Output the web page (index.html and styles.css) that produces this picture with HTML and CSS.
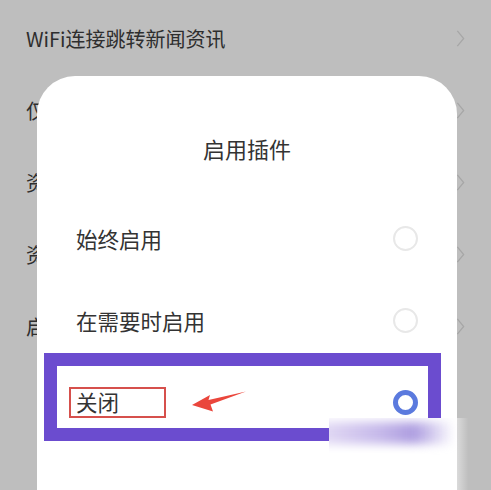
FILE: index.html
```html
<!DOCTYPE html>
<html lang="zh-CN">
<head>
    <meta charset="UTF-8">
    <meta name="viewport" content="width=device-width, initial-scale=1.0">
    <title>插件设置</title>
    <link rel="stylesheet" href="styles.css">
</head>
<body>
    <!-- Settings list (dimmed behind the dialog) -->
    <div class="settings">
        <div class="setting-row">
            <span>WiFi连接跳转新闻资讯</span>
            <svg class="chevron" viewBox="0 0 10 20"><path d="M1.5 1.5 L8.5 10 L1.5 18.5"/></svg>
        </div>
        <div class="setting-row">
            <span>仅WiFi下加载</span>
            <svg class="chevron" viewBox="0 0 10 20"><path d="M1.5 1.5 L8.5 10 L1.5 18.5"/></svg>
        </div>
        <div class="setting-row">
            <span>资讯推送通知</span>
            <svg class="chevron" viewBox="0 0 10 20"><path d="M1.5 1.5 L8.5 10 L1.5 18.5"/></svg>
        </div>
        <div class="setting-row">
            <span>资讯</span>
            <svg class="chevron" viewBox="0 0 10 20"><path d="M1.5 1.5 L8.5 10 L1.5 18.5"/></svg>
        </div>
        <div class="setting-row">
            <span>启用</span>
            <svg class="chevron" viewBox="0 0 10 20"><path d="M1.5 1.5 L8.5 10 L1.5 18.5"/></svg>
        </div>
    </div>

    <!-- Bottom sheet dialog -->
    <div class="dialog">
        <div class="dialog-title">启用插件</div>
        <div class="options">
            <div class="option">
                <span>始终启用</span>
                <span class="radio"></span>
            </div>
            <div class="option">
                <span>在需要时启用</span>
                <span class="radio"></span>
            </div>
            <div class="option-marked">
                <div class="option-inner">
                    <span class="label-box">关闭</span>
                    <svg class="pointer" viewBox="0 0 56 22">
                        <path d="M1 14 L19 4 L17.5 9 L55 0.5 L19.5 13.5 L22 20.5 Z"/>
                    </svg>
                    <span class="radio checked"></span>
                </div>
            </div>
        </div>
    </div>

    <div class="watermark"><div class="watermark-glow"></div></div>
</body>
</html>
```

FILE: styles.css
```css
* { margin: 0; padding: 0; box-sizing: border-box; }
body {
    width: 491px;
    height: 490px;
    overflow: hidden;
    position: relative;
    background: #bebebe;
    font-family: "Noto Sans CJK SC", "Noto Sans", sans-serif;
    color: #2e2e2e;
}
.settings { padding-top: 2px; }
.setting-row {
    height: 72px;
    padding: 0 26px;
    display: flex;
    align-items: center;
    justify-content: space-between;
    font-size: 20px;
}
.chevron { width: 9px; height: 19px; }
.chevron path { fill: none; stroke: #a6a6a6; stroke-width: 1.4; }

.dialog {
    position: absolute;
    left: 37px;
    top: 76px;
    width: 420px;
    height: 430px;
    background: #fff;
    border-radius: 38px 38px 0 0;
    color: #333;
}
.dialog-title {
    padding-top: 56px;
    line-height: 32px;
    font-size: 22px;
    text-align: center;
}
.options { margin-top: 33px; font-size: 21.5px; }
.option {
    height: 82px;
    padding: 0 39px;
    display: flex;
    align-items: center;
    justify-content: space-between;
}
.radio {
    width: 25px;
    height: 25px;
    border-radius: 50%;
    border: 2px solid #e8e8e8;
}
.radio.checked { border: 5px solid #5b7ade; }

.option-marked {
    height: 88px;
    margin: -8px 16px 0 7px;
    border: 13px solid #6b4ccf;
}
.option-inner {
    height: 100%;
    padding: 10px 10px 0 12px;
    display: flex;
    align-items: center;
}
.label-box {
    width: 97px;
    height: 31px;
    border: 2px solid #d6504c;
    padding-left: 5px;
    line-height: 26px;
}
.pointer { width: 56px; height: 22px; margin-left: 25px; }
.pointer path { fill: #ea463c; }
.option-inner .radio { margin-left: auto; }

.watermark {
    position: absolute;
    left: 329px;
    top: 418px;
    width: 162px;
    height: 72px;
    background: linear-gradient(to right, #fff 0%, #fff 70%, rgba(255,255,255,0) 86%);
    overflow: hidden;
}
.watermark-glow {
    margin: 4px 0 0 -10px;
    width: 135px;
    height: 22px;
    background: linear-gradient(to right, #e4dcf5 0%, #c6b9ea 45%, #ad9de0 70%, rgba(210,200,240,0) 100%);
    filter: blur(5px);
}
```
